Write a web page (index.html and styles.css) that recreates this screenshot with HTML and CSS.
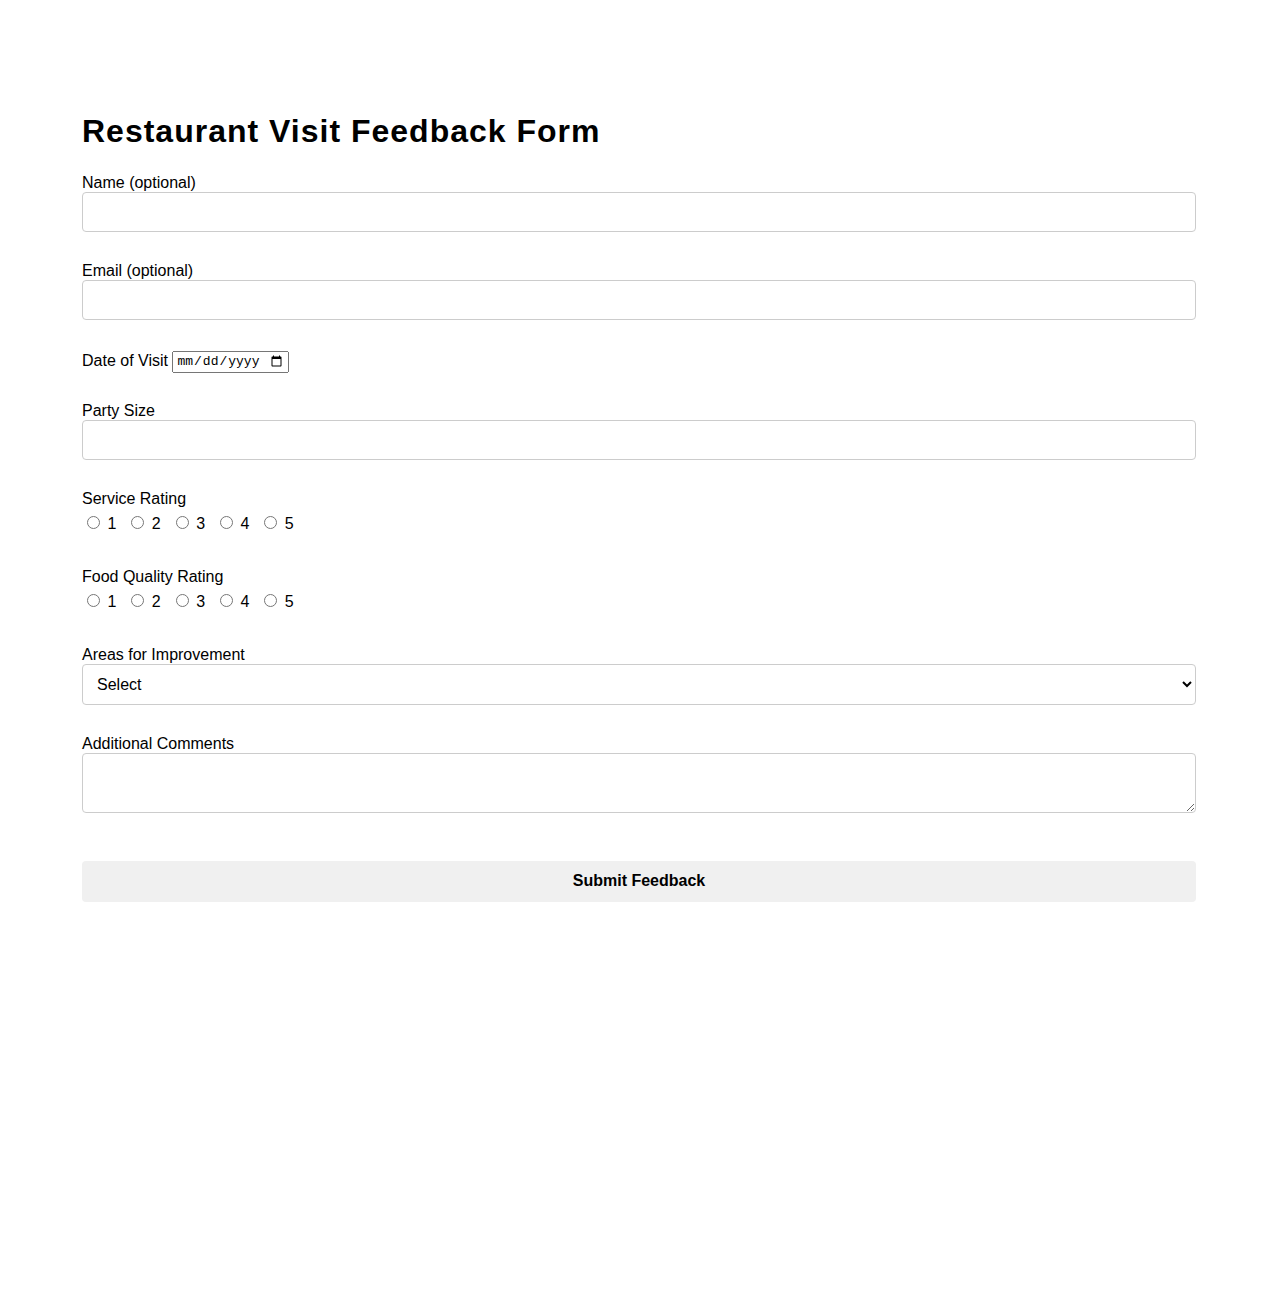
FILE: index.html
```html
<!DOCTYPE html>
<html lang="en">
<head>
<meta charset="utf-8">
<title>Restaurant Visit Feedback Form</title>
<link rel="stylesheet" href="styles.css">
</head>
<body>
<main class="page">
  <h1 class="title">Restaurant Visit Feedback Form</h1>
  <form class="feedback">
    <div class="field">
      <label class="field-label" for="name">Name (optional)</label>
      <input class="control" type="text" id="name" name="name">
    </div>
    <div class="field">
      <label class="field-label" for="email">Email (optional)</label>
      <input class="control" type="email" id="email" name="email">
    </div>
    <div class="field field-inline">
      <label for="visit-date">Date of Visit</label> <input class="date" type="date" id="visit-date" name="visit-date">
    </div>
    <div class="field">
      <label class="field-label" for="party">Party Size</label>
      <input class="control" type="number" id="party" name="party">
    </div>
    <div class="field">
      <span class="field-label">Service Rating</span>
      <div class="radio-row"><label class="radio"><input type="radio" name="service" value="1"> 1</label><label class="radio"><input type="radio" name="service" value="2"> 2</label><label class="radio"><input type="radio" name="service" value="3"> 3</label><label class="radio"><input type="radio" name="service" value="4"> 4</label><label class="radio"><input type="radio" name="service" value="5"> 5</label></div>
    </div>
    <div class="field">
      <span class="field-label">Food Quality Rating</span>
      <div class="radio-row"><label class="radio"><input type="radio" name="food" value="1"> 1</label><label class="radio"><input type="radio" name="food" value="2"> 2</label><label class="radio"><input type="radio" name="food" value="3"> 3</label><label class="radio"><input type="radio" name="food" value="4"> 4</label><label class="radio"><input type="radio" name="food" value="5"> 5</label></div>
    </div>
    <div class="field field-select">
      <label class="field-label" for="areas">Areas for Improvement</label>
      <select class="control" id="areas" name="areas">
        <option>Select</option>
        <option>Service speed</option>
        <option>Food quality</option>
        <option>Cleanliness</option>
        <option>Ambience</option>
      </select>
    </div>
    <div class="field">
      <label class="field-label" for="comments">Additional Comments</label>
      <textarea class="control" id="comments" name="comments"></textarea>
    </div>
    <button class="submit" type="submit">Submit Feedback</button>
  </form>
</main>
</body>
</html>
```

FILE: styles.css
```css
body {
  margin: 0;
  font-family: "Liberation Sans", Arial, sans-serif;
  font-size: 16px;
  color: #000;
  background: #fff;
}

.page {
  max-width: 1114px;
  margin: 0 auto;
  padding-top: 113px;
}

.title {
  margin: 0 0 23.8px;
  font-size: 32px;
  font-weight: bold;
  letter-spacing: 1px;
}

.field {
  margin-bottom: 30.6px;
}

.field-inline {
  margin-bottom: 28.6px;
}

.field-select {
  margin-bottom: 29.6px;
}

.field-label {
  display: block;
}

.control {
  display: block;
  box-sizing: border-box;
  width: 100%;
  height: 40px;
  padding: 10px;
  border: 1px solid #ccc;
  border-radius: 4px;
  font-family: "Liberation Sans", Arial, sans-serif;
  font-size: 16px;
  background: #fff;
  color: #000;
}

select.control {
  height: 41px;
}

textarea.control {
  height: 60px;
  resize: vertical;
}

/* native date picker, sized like the compact default control */
.date {
  box-sizing: border-box;
  width: 117px;
  height: 22px;
  padding: 1px 2px;
  font-family: "Liberation Mono", monospace;
  font-size: 13px;
}

.radio-row {
  padding: 5px 0 4.5px;
}

.radio {
  margin-right: 10px;
}

.submit {
  display: block;
  width: 100%;
  margin-top: 48px;
  padding: 11.5px;
  border: 0;
  border-radius: 4px;
  background: #f0f0f0;
  color: #000;
  font-family: "Liberation Sans", Arial, sans-serif;
  font-size: 16px;
  font-weight: bold;
}
```
